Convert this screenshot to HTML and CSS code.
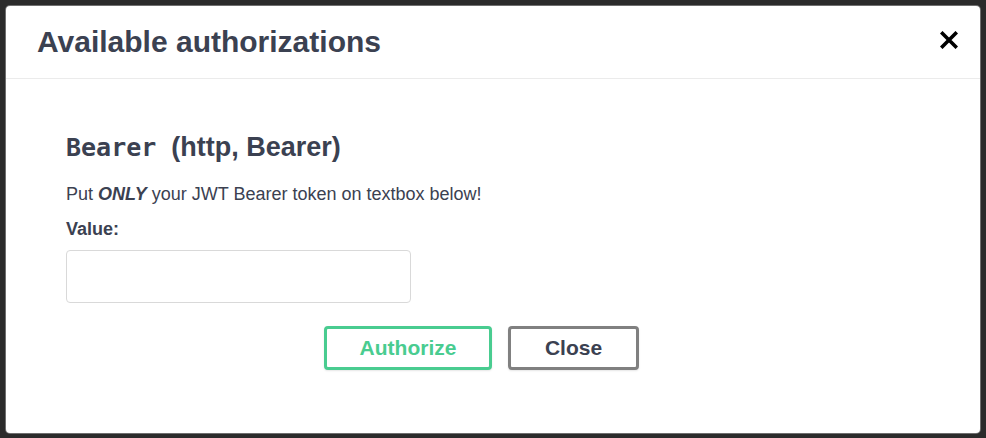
FILE: index.html
```html
<!DOCTYPE html>
<html>
<head>
<meta charset="utf-8">
<link rel="stylesheet" href="styles.css">
</head>
<body>
<div class="modal">
  <div class="modal-header">
    <h3 class="modal-title">Available authorizations</h3>
    <button class="close-x" aria-label="Close">
      <svg width="18" height="18" viewBox="0 0 18 18"><path d="M2.5 2.5 L15.5 15.5 M15.5 2.5 L2.5 15.5" stroke="#000" stroke-width="3.6" stroke-linecap="square"/></svg>
    </button>
  </div>
  <div class="modal-content">
    <h4 class="scheme-title"><code class="scheme-name">Bearer</code><span class="scheme-type">(http, Bearer)</span></h4>
    <p class="desc">Put <em>ONLY</em> your JWT Bearer token on textbox below!</p>
    <label class="value-label">Value:</label>
    <input class="value-input" type="text">
    <div class="btn-row">
      <button class="btn btn-authorize">Authorize</button>
      <button class="btn btn-close">Close</button>
    </div>
  </div>
</div>
</body>
</html>
```
FILE: styles.css
```css
html, body {
  margin: 0;
  padding: 0;
}
body {
  background: #2b2b2b;
  height: 438px;
  overflow: hidden;
  font-family: "Liberation Sans", Arial, sans-serif;
  color: #3b4151;
}
.modal {
  margin: 6px 6px 0 6px;
  width: 974px;
  height: 427px;
  background: #fff;
  border-radius: 4px;
  box-shadow: 0 0 0 1px #6f6f6f;
  box-sizing: border-box;
}
.modal-header {
  height: 72px;
  border-bottom: 1px solid #ebebeb;
  display: flex;
  align-items: center;
  justify-content: space-between;
  padding: 0 22px 0 31px;
}
.modal-title {
  margin: 0;
  font-size: 30px;
  font-weight: 700;
  line-height: 36px;
  color: #3b4151;
}
.close-x {
  border: none;
  background: none;
  padding: 0;
  width: 18px;
  height: 18px;
  display: flex;
  margin-top: -4px;
}
.modal-content {
  padding: 53px 83px 0 60px;
  display: flex;
  flex-direction: column;
}
.scheme-title {
  margin: 0;
  font-size: 27px;
  line-height: 31px;
  height: 31px;
  font-weight: 700;
  color: #3b4151;
  display: flex;
  align-items: baseline;
}
.scheme-name {
  font-family: "DejaVu Sans Mono", monospace;
  font-size: 25px;
  font-weight: 700;
  margin-right: 15px;
}
.desc {
  margin: 21px 0 0 0;
  font-size: 18px;
  line-height: 21px;
}
.desc em {
  font-weight: 700;
}
.value-label {
  margin-top: 14px;
  font-size: 18px;
  line-height: 21px;
  font-weight: 700;
}
.value-input {
  margin-top: 10px;
  width: 345px;
  height: 53px;
  box-sizing: border-box;
  border: 1px solid #d9d9d9;
  border-radius: 4px;
  padding: 8px 10px;
  font-size: 16px;
}
.btn-row {
  display: flex;
  justify-content: center;
  gap: 16px;
  margin-top: 23px;
}
.btn {
  height: 44px;
  box-sizing: border-box;
  background: #fff;
  border-radius: 4px;
  border: 3px solid #808080;
  font-family: "Liberation Sans", Arial, sans-serif;
  font-size: 21px;
  font-weight: 700;
  color: #3b4151;
  box-shadow: 0 1px 2px rgba(0,0,0,0.1);
}
.btn-authorize {
  width: 168px;
  border-color: #49cc90;
  color: #49cc90;
}
.btn-close {
  width: 131px;
}
```
